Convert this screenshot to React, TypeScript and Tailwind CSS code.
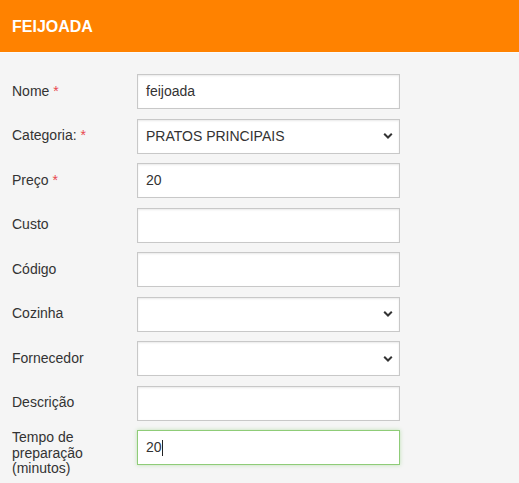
import React from "react";

const Chevron = () => (
  <svg className="pointer-events-none absolute right-[6px] top-1/2 -translate-y-1/2" width="10" height="7" viewBox="0 0 10 7">
    <path d="M1.2 1.3 L5 5 L8.8 1.3" fill="none" stroke="#333" strokeWidth="2" />
  </svg>
);

type Row = { label: React.ReactNode; value?: string; select?: boolean; focus?: boolean; req?: boolean };

const rows: Row[] = [
  { label: "Nome", value: "feijoada", req: true },
  { label: "Categoria:", value: "PRATOS PRINCIPAIS", select: true, req: true },
  { label: "Preço", value: "20", req: true },
  { label: "Custo" },
  { label: "Código" },
  { label: "Cozinha", select: true },
  { label: "Fornecedor", select: true },
  { label: "Descrição" },
];

export default function App() {
  return (
    <div className="w-[519px] h-[483px] bg-[#f5f5f5] overflow-hidden text-[14px] text-[#333]" style={{ fontFamily: "Arial, 'Liberation Sans', sans-serif" }}>
      <div className="h-[53px] bg-[#ff8200] border-b border-[#fafafa] flex items-center px-[12px]">
        <span className="text-white font-bold text-[16px] pt-[1px]">FEIJOADA</span>
      </div>
      <div className="pt-[21px] flex flex-col">
        {rows.map((r, i) => (
          <div key={i} className="flex items-center h-[44.5px] shrink-0">
            <div className="w-[137px] pl-[12px] pb-[10px]">
              {r.label}
              {r.req && <span className="text-[#e8474f]"> *</span>}
            </div>
            <div className="relative w-[263px] h-[35px] mb-[9.5px] bg-white border border-[#c8c8c8] shadow-[inset_0_1px_2px_rgba(0,0,0,0.09)] flex items-center pl-[8px]">
              {r.value && <span className="text-[#333]">{r.value}</span>}
              {r.select && <Chevron />}
            </div>
          </div>
        ))}
        <div className="flex items-start h-[53px] shrink-0">
          <div className="w-[137px] pl-[12px] pr-[20px] leading-[15.5px] pt-[0px]">Tempo de preparação (minutos)</div>
          <div className="relative w-[263px] h-[35px] bg-white border border-[#8fcc78] shadow-[0_0_4px_rgba(120,200,100,0.45)] flex items-center pl-[8px]">
            <span className="text-[#333]">20</span>
            <span className="inline-block w-[1px] h-[16px] bg-[#222] ml-[0.5px]" />
          </div>
        </div>
      </div>
    </div>
  );
}
